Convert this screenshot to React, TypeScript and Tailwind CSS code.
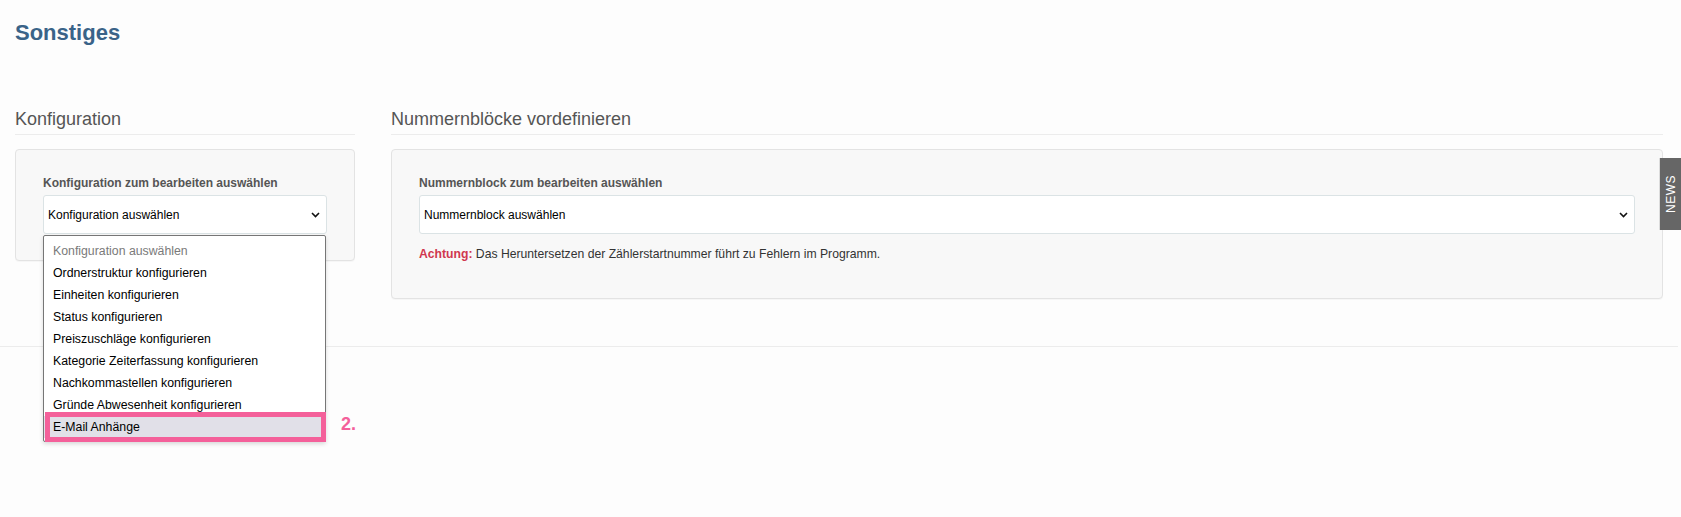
const options = [
  "Konfiguration auswählen",
  "Ordnerstruktur konfigurieren",
  "Einheiten konfigurieren",
  "Status konfigurieren",
  "Preiszuschläge konfigurieren",
  "Kategorie Zeiterfassung konfigurieren",
  "Nachkommastellen konfigurieren",
  "Gründe Abwesenheit konfigurieren",
  "E-Mail Anhänge",
];

const Chevron: React.FC = () => (
  <svg width="9" height="6" viewBox="0 0 9 6" className="shrink-0">
    <path d="M1 1l3.5 3.5L8 1" fill="none" stroke="#111" strokeWidth="1.6" />
  </svg>
);

const SelectBox: React.FC<{ value: string }> = ({ value }) => (
  <div className="flex h-[39px] items-center justify-between rounded-[3px] border border-[#dbe3e5] bg-white pl-[4px] pr-[6px] text-[12px] text-black">
    <span>{value}</span>
    <Chevron />
  </div>
);

const Section: React.FC<{ title: string; children: React.ReactNode }> = ({
  title,
  children,
}) => (
  <div>
    <h2 className="border-b border-[#ececec] pb-[5px] text-[18px] leading-[20px] text-[#555]">
      {title}
    </h2>
    <div className="mt-[14px] rounded-[4px] border border-[#e3e3e3] bg-[#f8f8f8] shadow-[0_1px_1px_rgba(0,0,0,0.03)]">
      {children}
    </div>
  </div>
);

const Label: React.FC<{ text: string }> = ({ text }) => (
  <div className="mb-[3px] text-[12px] font-bold leading-[17px] text-[#555]">
    {text}
  </div>
);

const ConfigDropdown: React.FC = () => (
  <div className="absolute left-0 right-[1px] top-[40px] z-10 rounded-[2px] border border-[#767676] bg-white pt-[4px] pb-[3px] text-[12.3px] shadow-[0_2px_4px_rgba(0,0,0,0.15)]">
    {options.map((o, i) => (
      <div
        key={o}
        className={
          i === 0
            ? "flex h-[22px] items-center pl-[9px] text-[#7a7a7a]"
            : i === options.length - 1
              ? "flex h-[22px] items-center bg-[#e1e0e8] pl-[9px] text-black"
              : "flex h-[22px] items-center pl-[9px] text-black"
        }
      >
        {o}
      </div>
    ))}
    <div className="absolute bottom-[-1px] left-[1px] right-[-1px] h-[30px] border-[5px] border-[#f4609a]" />
    <span className="absolute bottom-[8px] right-[-31px] text-[18px] font-bold leading-[18px] text-[#f4609a]">
      2.
    </span>
  </div>
);

export default function App() {
  return (
    <div className="relative min-h-[517px] bg-[#fdfdfd] font-['Liberation_Sans',Arial,sans-serif]">
      <h1 className="px-[15px] pt-[21px] text-[22px] font-bold leading-[24px] text-[#3a6388]">
        Sonstiges
      </h1>

      <div className="mt-[64px] flex gap-[36px] pl-[15px] pr-[18px]">
        <div className="w-[340px] shrink-0">
          <Section title="Konfiguration">
            <div className="px-[27px] pt-[25px] pb-[26px]">
              <Label text="Konfiguration zum bearbeiten auswählen" />
              <div className="relative">
                <SelectBox value="Konfiguration auswählen" />
                <ConfigDropdown />
              </div>
            </div>
          </Section>
        </div>

        <div className="flex-1">
          <Section title="Nummernblöcke vordefinieren">
            <div className="px-[27px] pt-[25px] pb-[35px]">
              <Label text="Nummernblock zum bearbeiten auswählen" />
              <SelectBox value="Nummernblock auswählen" />
              <p className="mt-[12px] text-[12.2px] leading-[17px] text-[#333]">
                <span className="font-bold text-[#d0374f]">Achtung:</span> Das
                Heruntersetzen der Zählerstartnummer führt zu Fehlern im
                Programm.
              </p>
            </div>
          </Section>
        </div>
      </div>

      <div className="mr-[3px] mt-[47px] border-t border-[#ececec]" />

      <div className="absolute right-0 top-[158px] flex h-[72px] w-[22px] items-center justify-center border-l border-[#dcdcdc] bg-[#666]">
        <span className="-rotate-90 whitespace-nowrap text-[12px] tracking-[0.5px] text-white">
          NEWS
        </span>
      </div>
    </div>
  );
}
